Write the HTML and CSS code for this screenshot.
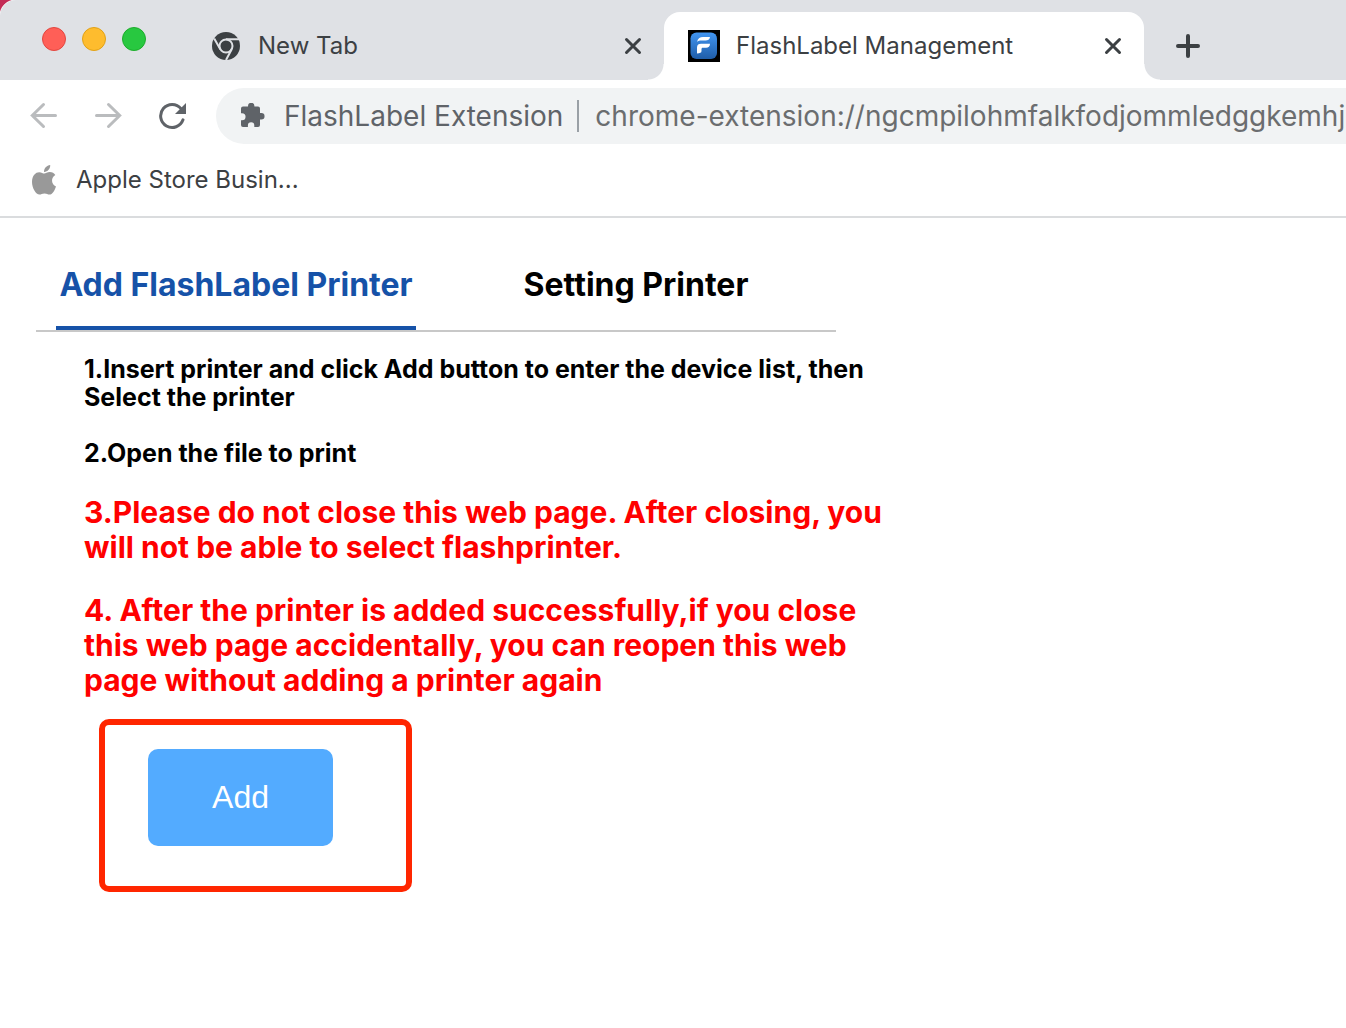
FILE: index.html
```html
<!DOCTYPE html>
<html lang="en">
<head>
    <meta charset="UTF-8">
    <meta name="viewport" content="width=device-width, initial-scale=1.0">
    <title>FlashLabel Management</title>
    <link rel="stylesheet" href="styles.css">
</head>
<body>

<!-- Browser window -->
<header class="browser">
    <div class="tab-strip">
        <div class="window-buttons">
            <button type="button" class="light red" aria-label="Close window"></button>
            <button type="button" class="light yellow" aria-label="Minimize window"></button>
            <button type="button" class="light green" aria-label="Zoom window"></button>
        </div>

        <div class="tab">
            <svg class="tab-icon" width="32" height="32" viewBox="-2 -2 32 32">
                <circle cx="14" cy="14" r="14" fill="#3c4043"/>
                <circle cx="14" cy="14" r="6.5" fill="none" stroke="#dfe1e5" stroke-width="2"/>
                <path d="M14 7.200H27M8.300 17.300L2.200 6.500M19.700 17.300L14 28" fill="none" stroke="#dfe1e5" stroke-width="2"/>
            </svg>
            <span class="tab-title">New Tab</span>
            <button type="button" class="icon-button" aria-label="Close New Tab">
                <svg width="18" height="18" viewBox="0 0 18 18"><path d="M2.500 2.500L15.500 15.500M15.500 2.500L2.500 15.500" stroke="#3c4043" stroke-width="3" stroke-linecap="round"/></svg>
            </button>
        </div>

        <div class="tab current">
            <svg class="tab-icon" width="32" height="32" viewBox="0 0 32 32">
                <defs>
                    <linearGradient id="logoFill" x1="0" y1="0" x2="0" y2="1">
                        <stop offset="0" stop-color="#4296f2"/>
                        <stop offset="1" stop-color="#1f5da8"/>
                    </linearGradient>
                </defs>
                <rect width="32" height="32" fill="#000"/>
                <rect x="2.5" y="2.5" width="26.5" height="26.5" rx="6" fill="url(#logoFill)"/>
                <path d="M9 11.8C10 8.2 12 7 15 7H22C21.500 9.800 20 10.400 17.500 10.400H13.5C11.5 10.400 10.200 10.800 9 11.8Z" fill="#fff"/>
                <path d="M9 21V17.5C9 14.8 10.8 13.8 13 13.8H22C22 16.4 20.5 17.800 18 17.800H14.8C13.8 17.800 13.500 18.500 13.500 19.4V21C13.500 22.8 12 23.400 9 23.400Z" fill="#fff"/>
            </svg>
            <span class="tab-title">FlashLabel Management</span>
            <button type="button" class="icon-button" aria-label="Close FlashLabel Management">
                <svg width="18" height="18" viewBox="0 0 18 18"><path d="M2.500 2.500L15.500 15.500M15.500 2.500L2.500 15.500" stroke="#3c4043" stroke-width="3" stroke-linecap="round"/></svg>
            </button>
        </div>

        <button type="button" class="icon-button new-tab" aria-label="New tab">
            <svg width="24" height="24" viewBox="0 0 24 24"><path d="M12 2V22M2 12H22" stroke="#3c4043" stroke-width="4" stroke-linecap="round"/></svg>
        </button>
    </div>

    <div class="toolbar">
        <button type="button" class="icon-button" aria-label="Back">
            <svg width="28" height="28" viewBox="0 0 28 28"><path d="M25.5 13.500H2.500M13.500 2.500L2.300 13.500L13.500 24.500" fill="none" stroke="#babcbe" stroke-width="3" stroke-linecap="round"/></svg>
        </button>
        <button type="button" class="icon-button" aria-label="Forward">
            <svg width="28" height="28" viewBox="0 0 28 28"><path d="M2.500 13.500H25.500M14.500 2.500L25.700 13.500L14.500 24.500" fill="none" stroke="#babcbe" stroke-width="3" stroke-linecap="round"/></svg>
        </button>
        <button type="button" class="icon-button" aria-label="Reload">
            <svg width="28" height="28" viewBox="0 0 28 28"><path d="M25 17.800A11.500 11.500 0 1 1 23 6.600" fill="none" stroke="#5f6368" stroke-width="3" stroke-linecap="round"/><path d="M28 1V12H17Z" fill="#5f6368"/></svg>
        </button>

        <div class="address-bar">
            <svg width="26" height="26" viewBox="0 0 26 26"><path d="M3 3.500H8V3A3 3 0 0 1 14.400 3V3.500H18Q20 3.500 20 5.500V10H21.300A3.200 3.200 0 0 1 21.300 16.500H20V22Q20 24 18 24H14.300V22.500A3.200 3.200 0 0 0 7.900 22.500V24H3Q1 24 1 22V17.300H2A3.500 3.500 0 0 0 2 10.200H1V5.500Q1 3.500 3 3.500Z" fill="#5f6368"/></svg>
            <label for="address">FlashLabel Extension</label>
            <input type="text" id="address" value="chrome-extension://ngcmpilohmfalkfodjommledggkemhjp">
        </div>
    </div>

    <nav class="bookmarks">
        <a href="#">
            <svg width="24" height="30" viewBox="0 0 24 30">
                <path d="M18.200 0C18.500 3.600 15.500 7 12 6.900C11.700 3.600 14.800 0.300 18.200 0Z" fill="#999"/>
                <path d="M12.300 8.600C13.600 8.600 15.300 7.100 17.800 7.100C20.200 7.100 22.200 8.400 23.300 10.100C18.500 13 19.300 19.500 24 21.400C22.900 24.900 20.300 29.600 17.500 29.600C15.500 29.600 15 28.400 12.500 28.400C10 28.400 9.300 29.600 7.400 29.600C4 29.600 0 23.200 0 17C0 10.500 3.600 7.200 7.200 7.200C9.500 7.200 11 8.600 12.300 8.600Z" fill="#999"/>
            </svg>
            <span>Apple Store Busin...</span>
        </a>
    </nav>
</header>

<!-- Extension page -->
<main class="page">
    <nav class="page-tabs">
        <a href="#add" class="active">Add FlashLabel Printer</a>
        <a href="#setting">Setting Printer</a>
    </nav>

    <section class="steps" id="add">
        <p>1.Insert printer and click Add button to enter the device list, then Select the printer</p>
        <p>2.Open the file to print</p>
        <p class="warning">3.Please do not close this web page. After closing, you will not be able to select flashprinter.</p>
        <p class="warning">4. After the printer is added successfully,if you close this web page accidentally, you can reopen this web page without adding a printer again</p>

        <div class="highlight">
            <button type="button" class="add-button">Add</button>
        </div>
    </section>
</main>

</body>
</html>
```
FILE: styles.css
```css
* {
    box-sizing: border-box;
}

body {
    margin: 0;
    background-color: white;
    color: black;
    font-family: Inter, "Liberation Sans", sans-serif;
    overflow-x: hidden;
}

button {
    padding: 0;
    border: none;
    background: none;
    font-family: inherit;
    cursor: pointer;
}

a {
    color: inherit;
    text-decoration: none;
}

svg {
    display: block;
    flex-shrink: 0;
}

.browser {
    border-bottom: 2px solid #dadcde;
    background: radial-gradient(circle at 16px 16px, transparent 16px, #c32b55 17px) 0 0 / 16px 16px no-repeat;
    color: #3c4043;
}

/* Tab strip */
.tab-strip {
    display: flex;
    height: 80px;
    padding: 12px 0 0 42px;
    background-color: #dfe1e5;
    border-top-left-radius: 16px;
}

.window-buttons {
    display: flex;
    gap: 16px;
    width: 144px;
    padding-top: 15px;
}

.light {
    width: 24px;
    height: 24px;
    border-radius: 50%;
}

.red {
    background-color: #ff5f57;
    border: 1px solid #e2463f;
}

.yellow {
    background-color: #febc2e;
    border: 1px solid #e1a116;
}

.green {
    background-color: #28c840;
    border: 1px solid #1dad2b;
}

.tab {
    display: flex;
    align-items: center;
    position: relative;
    width: 478px;
    padding: 0 22px 0 24px;
    font-size: 24px;
}

.tab-title {
    flex: 1;
    margin-left: 16px;
    padding-bottom: 2px;
    white-space: nowrap;
}

.current {
    width: 480px;
    background-color: white;
    border-radius: 16px 16px 0 0;
}

/* Curved feet of the current tab */
.current::before,
.current::after {
    content: "";
    position: absolute;
    bottom: 0;
    width: 16px;
    height: 16px;
}

.current::before {
    left: -16px;
    background: radial-gradient(circle at 0 0, transparent 15px, white 16px);
}

.current::after {
    right: -16px;
    background: radial-gradient(circle at 100% 0, transparent 15px, white 16px);
}

.new-tab {
    margin-left: 32px;
}

/* Toolbar */
.toolbar {
    display: flex;
    align-items: center;
    gap: 36px;
    padding: 8px 0 8px 30px;
    background-color: white;
}

.address-bar {
    display: flex;
    align-items: center;
    flex: 1;
    min-width: 0;
    height: 56px;
    margin-left: -6px;
    padding-left: 24px;
    background-color: #f1f3f4;
    border-radius: 28px 0 0 28px;
    color: #5f6368;
    font-size: 28px;
}

.address-bar label {
    margin-left: 18px;
    padding-right: 14px;
    border-right: 2px solid #9aa0a6;
    line-height: 32px;
    white-space: nowrap;
}

.address-bar input {
    flex: 1;
    min-width: 0;
    padding: 0 0 0 16px;
    border: none;
    outline: none;
    background: none;
    color: #6b6d6f;
    font: inherit;
}

.bookmarks {
    display: flex;
    padding: 8px 32px 16px;
    background-color: white;
    font-size: 24px;
}

.bookmarks a {
    display: flex;
    align-items: center;
    gap: 20px;
    height: 40px;
}

.bookmarks span {
    padding-bottom: 2px;
}

/* Page */
.page {
    padding: 18px 36px;
}

.page-tabs {
    display: flex;
    gap: 70px;
    max-width: 800px;
    padding: 0 20px;
    border-bottom: 2px solid #c8c8c8;
    font-size: 32px;
    font-weight: 700;
    line-height: 40px;
}

.page-tabs a {
    min-width: 300px;
    padding: 29px 0 21px;
    border-bottom: 4px solid transparent;
    text-align: center;
    white-space: nowrap;
}

.page-tabs .active {
    min-width: 360px;
    border-color: #1652a8;
    color: #1652a8;
}

.steps {
    max-width: 860px;
    padding: 23px 0 0 48px;
    font-size: 25px;
    font-weight: 700;
    line-height: 28px;
}

.steps p {
    margin: 0 0 28px;
}

.steps .warning {
    color: #ff0000;
    font-size: 30px;
    line-height: 35px;
}

.highlight {
    width: 313px;
    margin: -7px 0 0 15px;
    padding: 24px 43px 40px;
    border: 6px solid #ff2600;
    border-radius: 10px;
}

.add-button {
    display: block;
    width: 185px;
    height: 97px;
    background-color: #53abff;
    border-radius: 10px;
    color: white;
    font-family: "Liberation Sans", Arial, sans-serif;
    font-size: 32px;
}
```
